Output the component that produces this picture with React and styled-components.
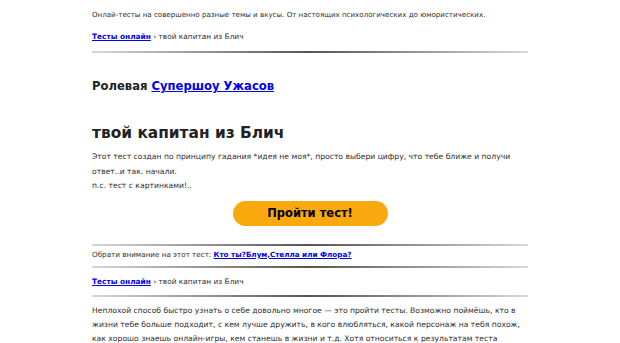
import React from "react";
import styled, { createGlobalStyle } from "styled-components";

const GlobalStyle = createGlobalStyle`
  html, body {
    margin: 0;
    padding: 0;
    background: #fff;
  }
  body {
    font-family: "DejaVu Sans", Verdana, sans-serif;
    color: #2e2e2e;
    overflow: hidden;
  }
`;

const Page = styled.div`
  width: 436px;
  margin: 0 auto;
  padding-top: 9px;
`;

const Small = styled.p`
  margin: 0;
  font-size: 7.1px;
  line-height: 12px;
  white-space: nowrap;
`;

const Crumbs = styled.div`
  font-size: 7.4px;
  line-height: 12px;
  padding: ${(p) => p.$pad || "10px 0 8px"};
`;

const Link = styled.a`
  color: #0000ee;
  font-weight: bold;
  text-decoration: underline;
`;

const Rule = styled.div`
  height: 2px;
  background: linear-gradient(to right, #d8d8d8, #555 50%, #d8d8d8);
`;

const Category = styled.h2`
  margin: 25px 0 0;
  font-size: 11.6px;
  line-height: 16px;
  font-weight: bold;
  color: #222;
`;

const Title = styled.h1`
  margin: 29px 0 0;
  font-size: 15.4px;
  line-height: 20px;
  font-weight: bold;
  color: #222;
`;

const Intro = styled.div`
  margin-top: 7px;
  font-size: 7.65px;
  line-height: 14.5px;
`;

const ButtonRow = styled.div`
  display: flex;
  justify-content: center;
  padding: 7px 0 18px;
`;

const Button = styled.a`
  display: flex;
  align-items: center;
  justify-content: center;
  width: 155px;
  height: 25px;
  border-radius: 13px;
  background: #f9a90d;
  color: #000;
  font-weight: bold;
  font-size: 11.5px;
  text-decoration: none;
`;

const Notice = styled.div`
  font-size: 7.2px;
  line-height: 12px;
  padding: 3px 0 5px;
`;

const About = styled.p`
  margin: 7px 0 0;
  font-size: 7.65px;
  line-height: 14.2px;
`;

const App = () => (
  <>
    <GlobalStyle />
    <Page>
      <Small>
        Онлай-тесты на совершенно разные темы и вкусы. От настоящих
        психологических до юмористических.
      </Small>
      <Crumbs>
        <Link href="#">Тесты онлайн</Link> › твой капитан из Блич
      </Crumbs>
      <Rule />
      <Category>
        Ролевая <Link href="#">Супершоу Ужасов</Link>
      </Category>
      <Title>твой капитан из Блич</Title>
      <Intro>
        Этот тест создан по принципу гадания *идея не моя*, просто выбери
        цифру, что тебе ближе и получи ответ..и так. начали.
        <br />
        п.с. тест с картинками!..
      </Intro>
      <ButtonRow>
        <Button href="#">Пройти тест!</Button>
      </ButtonRow>
      <Rule />
      <Notice>
        Обрати внимание на этот тест:{" "}
        <Link href="#">Кто ты?Блум,Стелла или Флора?</Link>
      </Notice>
      <Rule />
      <Crumbs $pad="8px 0 7px">
        <Link href="#">Тесты онлайн</Link> › твой капитан из Блич
      </Crumbs>
      <Rule />
      <About>
        Неплохой способ быстро узнать о себе довольно многое — это пройти
        тесты. Возможно поймёшь, кто в жизни тебе больше подходит, с кем лучше
        дружить, в кого влюбляться, какой персонаж на тебя похож, как хорошо
        знаешь онлайн-игры, кем станешь в жизни и т.д. Хотя относиться к
        результатам теста
      </About>
    </Page>
  </>
);

export default App;
